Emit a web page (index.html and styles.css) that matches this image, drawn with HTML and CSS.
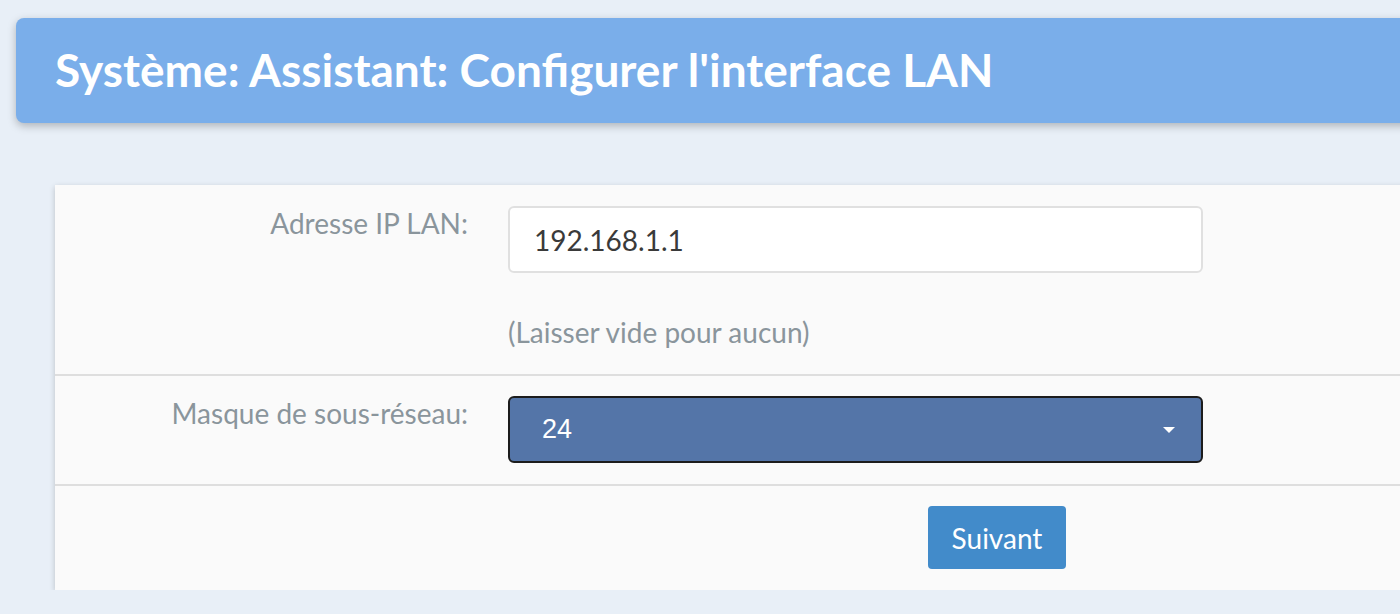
FILE: index.html
```html
<!DOCTYPE html>
<html lang="fr">
<head>
  <meta charset="UTF-8">
  <meta name="viewport" content="width=device-width, initial-scale=1.0">
  <title>Assistant</title>
  <link rel="stylesheet" href="styles.css">
</head>
<body>
  <div class="page">
    <header class="page-header">
      <h1>Système: Assistant: Configurer l'interface LAN</h1>
    </header>
    <main class="panel">
      <form class="wizard">
        <div class="row row-ip">
          <label class="row-label" for="lanip">Adresse IP LAN:</label>
          <div class="row-field">
            <input type="text" id="lanip" class="text-input" value="192.168.1.1">
            <p class="help">(Laisser vide pour aucun)</p>
          </div>
        </div>
        <div class="row">
          <label class="row-label" for="subnet">Masque de sous-réseau:</label>
          <div class="row-field">
            <div class="select" id="subnet">
              <span>24</span>
              <span class="caret"></span>
            </div>
          </div>
        </div>
        <div class="row row-actions">
          <button type="button" class="btn">Suivant</button>
        </div>
      </form>
    </main>
  </div>
</body>
</html>
```

FILE: styles.css
```css
html, body, h1, p {
  margin: 0;
  padding: 0;
}

body {
  background-color: #e8eff7;
  font-family: Lato, "Open Sans", sans-serif;
  overflow: hidden;
}

.page {
  padding-top: 18px;
}

.page-header {
  margin-left: 16px;
  margin-right: -20px;
  height: 105px;
  display: flex;
  align-items: center;
  padding-left: 39px;
  background-color: #7aaeea;
  border-radius: 8px 0 0 8px;
  box-shadow: 0 3px 8px rgba(0, 0, 0, 0.25);
}
.page-header h1 {
  color: #fff;
  font-size: 46px;
  font-weight: 700;
  margin-top: -3px;
}

.panel {
  margin-top: 62px;
  margin-left: 55px;
  margin-right: -20px;
  background-color: #fafafa;
  box-shadow: 0 2px 6px rgba(0, 0, 0, 0.2);
}

.row {
  display: flex;
  padding: 20px 0 21px;
  border-bottom: 2px solid #dedede;
}
.row-ip {
  padding: 21px 0 25px;
}
.row:last-child {
  border-bottom: none;
}
.row-label {
  width: 413px;
  text-align: right;
  padding-right: 40px;
  padding-top: 0;
  font-size: 28px;
  color: #8a959c;
}
.row-field {
  width: 695px;
}

.text-input {
  display: block;
  box-sizing: border-box;
  width: 100%;
  height: 67px;
  padding: 0 24px;
  border: 2px solid #e0e0e0;
  border-radius: 6px;
  background-color: #fff;
  font-family: Lato, sans-serif;
  font-size: 28px;
  color: #3a3a3a;
}

.help {
  margin-top: 42px;
  font-size: 28px;
  color: #8a959c;
}

.select {
  box-sizing: border-box;
  height: 67px;
  display: flex;
  align-items: center;
  justify-content: space-between;
  padding: 0 26px 0 32px;
  background-color: #5475a8;
  border: 2px solid #1c1c1c;
  border-radius: 6px;
  color: #fff;
  font-family: "Liberation Sans", Arial, sans-serif;
  font-size: 27px;
}
.caret {
  width: 0;
  height: 0;
  border-left: 6px solid transparent;
  border-right: 6px solid transparent;
  border-top: 6px solid #fff;
}

.row-actions {
  padding: 20px 0 21px 873px;
}
.btn {
  height: 63px;
  width: 138px;
  border: none;
  border-radius: 4px;
  background-color: #428bca;
  color: #fff;
  font-family: Lato, sans-serif;
  font-size: 28px;
}
```
